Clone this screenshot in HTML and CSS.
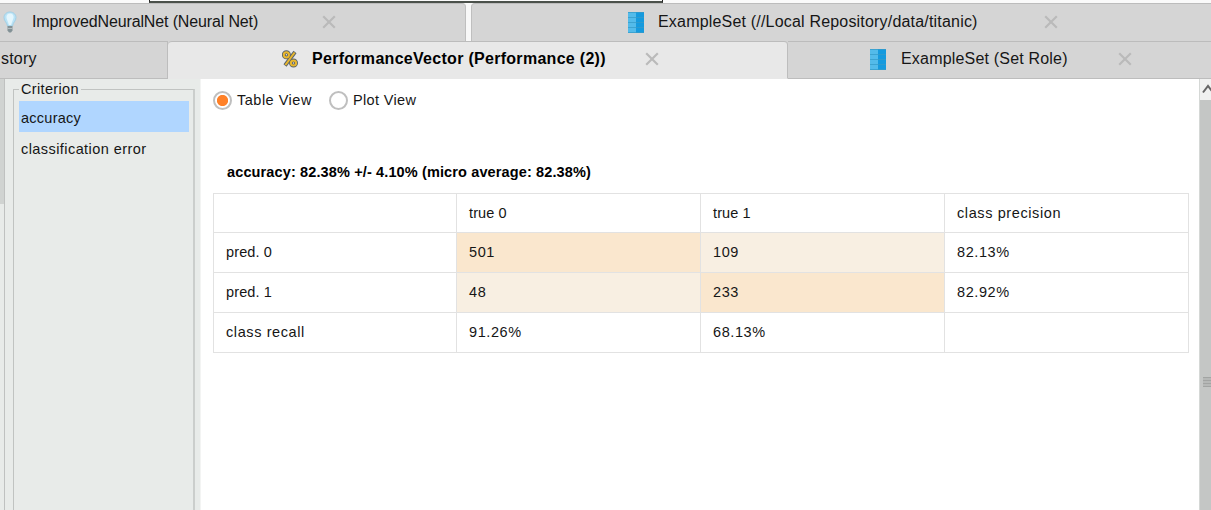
FILE: index.html
```html
<!DOCTYPE html>
<html lang="en">
<head>
<meta charset="utf-8">
<title>PerformanceVector</title>
<link rel="stylesheet" href="styles.css">
</head>
<body>
<svg width="0" height="0" class="defs">
  <symbol id="close" viewBox="0 0 14 14"><path d="M1.200 1.200 12.800 12.800M12.800 1.200 1.200 12.800" stroke="#bababa" stroke-width="2.200" fill="none"/></symbol>
  <symbol id="data" viewBox="0 0 16 21">
    <path fill="#53bbea" d="M0 0h8v21H0z"/><path fill="#159ade" d="M8 0h8v21H8z"/>
    <path stroke="#359bc9" d="M0 .5h16M0 5.500h16M0 10.500h16M0 15.500h16M0 20.500h16" opacity=".75"/>
  </symbol>
</svg>
<div class="app">
  <div class="strip"><div class="frame"></div></div>
  <div class="tabs upper">
    <div class="tab net">
      <svg class="bulb" viewBox="0 0 14 22"><path fill="#b9e3f6" stroke="#a2cfe5" d="M7 1C3.400 1 1 3.500 1 6.500c0 3.500 3 5 3.500 8.500h5C10 11.500 13 10 13 6.500 13 3.500 10.600 1 7 1z"/><path fill="#e4f6fd" d="M7 2.500c2.500 0 4 2 3.500 4.500L8 14H6L3.500 7C3 4.500 4.500 2.500 7 2.500z"/><path fill="#829196" d="M4.500 15h5v4.500L8 21.500H6l-1.500-2z"/><path stroke="#b3bdc0" d="M4.500 17.500h5"/></svg>
      <span class="label">ImprovedNeuralNet (Neural Net)</span>
      <svg class="close"><use href="#close"/></svg>
    </div>
    <div class="tab titanic">
      <svg class="data"><use href="#data"/></svg>
      <span class="label">ExampleSet (//Local Repository/data/titanic)</span>
      <svg class="close"><use href="#close"/></svg>
    </div>
  </div>
  <div class="tabs lower">
    <div class="tab history"><span class="label">story</span></div>
    <div class="tab active">
      <svg class="percent" viewBox="0 0 16 18"><g fill="none" stroke="#59636a" stroke-width="3.800"><circle cx="4.400" cy="4.800" r="2.600"/><circle cx="11.500" cy="13" r="2.600"/><path d="M13 2 3 15.500"/></g><g fill="none" stroke="#e9b72d" stroke-width="2"><circle cx="4.400" cy="4.800" r="2.600"/><circle cx="11.500" cy="13" r="2.600"/><path d="M12.600 2.500 3.400 15"/></g></svg>
      <span class="label">PerformanceVector (Performance (2))</span>
      <svg class="close"><use href="#close"/></svg>
    </div>
    <div class="tab role">
      <svg class="data"><use href="#data"/></svg>
      <span class="label">ExampleSet (Set Role)</span>
      <svg class="close"><use href="#close"/></svg>
    </div>
  </div>
  <div class="body">
    <div class="rail"><div class="rail-thumb"></div></div>
    <aside class="side">
      <fieldset class="group">
        <legend>Criterion</legend>
        <div class="item selected">accuracy</div>
        <div class="item"><span class="error">classification error</span></div>
      </fieldset>
    </aside>
    <main class="content">
      <div class="views">
        <span class="radio on"></span><span class="view table-view">Table View</span>
        <span class="radio"></span><span class="view plot-view">Plot View</span>
      </div>
      <h1>accuracy: 82.38% +/- 4.10% (micro average: 82.38%)</h1>
      <table>
        <colgroup><col class="first"><col class="rest"><col class="rest"><col class="rest"></colgroup>
        <tr class="head"><td></td><td class="short">true 0</td><td class="short">true 1</td><td>class precision</td></tr>
        <tr><td class="short">pred. 0</td><td class="hit">501</td><td class="miss">109</td><td>82.13%</td></tr>
        <tr><td class="short">pred. 1</td><td class="miss">48</td><td class="hit">233</td><td>82.92%</td></tr>
        <tr><td>class recall</td><td>91.26%</td><td>68.13%</td><td></td></tr>
      </table>
    </main>
    <div class="scroll">
      <div class="up"><svg viewBox="0 0 12 10"><path d="M1 8.500 6 2l5 6.500" fill="none" stroke="#666" stroke-width="2"/></svg></div>
      <div class="thumb"><div class="grip"></div></div>
    </div>
  </div>
</div>
</body>
</html>
```
FILE: styles.css
```css
* { box-sizing: border-box; }
body { margin: 0; width: 1211px; height: 510px; overflow: hidden; background: #fff; color: #161616; font-family: "Liberation Sans", Arial, sans-serif; font-size: 14.5px; }
.defs { display: block; }
.app { display: flex; flex-direction: column; height: 510px; }
.strip { height: 3px; background: #fafafa; flex: none; }
.frame { width: 514px; height: 3px; margin-left: 149px; border: solid #222; border-width: 0 1px 2px; border-bottom-color: #4b514b; }
.tabs { display: flex; height: 38px; flex: none; background: #f8f8f8; }
.tab { display: flex; align-items: center; flex: none; height: 38px; background: #d5d5d5; border-top: 1px solid #bcbcbc; white-space: nowrap; }
.tab svg { flex: none; }
.label { font-size: 16px; line-height: 20px; letter-spacing: .19px; flex: none; }
.close { width: 14px; height: 14px; }
.data { width: 16px; height: 21px; }
.upper .tab { padding-bottom: 1px; }
.net { width: 466px; padding-left: 3px; border-right: 1px solid #bfbfbf; border-radius: 0 4px 0 0; }
.bulb { width: 14px; height: 22px; }
.net .label { width: 290px; margin-left: 15px; letter-spacing: -.14px; }
.titanic { width: 740px; margin-left: 5px; padding-left: 156px; border-left: 1px solid #bfbfbf; border-radius: 4px 0 0; }
.titanic .label { width: 386px; margin-left: 14px; }
.lower { background: #d5d5d5; }
.lower .tab { border-bottom: 1px solid #bdbdbd; padding-bottom: 2px; }
.history { width: 168px; padding-left: 1px; border-right: 1px solid #bdbdbd; }
.lower .active { width: 620px; padding-left: 114px; background: #e8e8e8; border-bottom-color: #e8e8e8; border-right: 1px solid #bdbdbd; border-radius: 4px 4px 0 0; }
.percent { width: 16px; height: 18px; }
.active .label { width: 333px; margin-left: 14px; font-weight: bold; color: #000; letter-spacing: .29px; }
.role { width: 423px; padding-left: 82px; }
.role .label { width: 217px; margin-left: 15px; }
.body { display: flex; flex: 1; min-height: 0; }
.rail { width: 5px; background: #e8ebe9; border-right: 1px solid #bfc1c0; flex: none; }
.rail-thumb { height: 125px; background: #d0d3d1; }
.side { width: 196px; background: #e8ebe9; padding: 2px 5px 0 8px; flex: none; border-right: 1px solid #f3f4f3; }
.group { margin: 0; padding: 0 4px 0 5px; height: 450px; min-width: 0; border: 1px solid #c0c3c1; border-right: 2px solid #cbcecc; }
legend { padding: 0 2px; line-height: 17px; letter-spacing: .35px; }
.item { height: 31px; line-height: 34px; padding-left: 2px; letter-spacing: .25px; }
.item.selected { background: #b0d6ff; margin-top: 3px; }
.error { letter-spacing: .43px; }
.content { width: 998px; background: #fff; padding: 11px 0 0 12px; flex: none; }
.views { display: flex; align-items: center; height: 20px; }
.radio { width: 19px; height: 19px; border-radius: 50%; border: 2.5px solid #bfbfbf; background: #fff; flex: none; }
.radio.on { background: radial-gradient(circle, #ff8128 0 5.2px, #fff 6px); }
.view { margin-left: 5px; letter-spacing: .35px; }
.table-view { width: 92px; letter-spacing: .5px; }
h1 { margin: 53px 0 0 14px; font-size: 14.5px; line-height: 18px; height: 30px; color: #000; letter-spacing: .13px; }
table { border-collapse: collapse; table-layout: fixed; width: 976px; }
.first { width: 243px; }
.rest { width: 244px; }
td { height: 40px; border: 1px solid #e2e2e2; padding: 0 0 1px 12px; letter-spacing: .6px; }
.head td { height: 39px; }
td.short { letter-spacing: .12px; }
.hit { background: #fae7ce; }
.miss { background: #f8efe2; }
.scroll { flex: 1; border-left: 1px solid #d5d8d6; background: #c4c6c5; overflow: hidden; }
.up { height: 21px; background: #f0f1f0; padding: 5px 0 0 2px; }
.up svg { display: block; width: 12px; height: 10px; }
.grip { width: 14px; height: 10px; margin: 277px 0 0 3px; background: repeating-linear-gradient(#a2a4a3 0 1px, #b6b8b7 1px 3px); }
```
